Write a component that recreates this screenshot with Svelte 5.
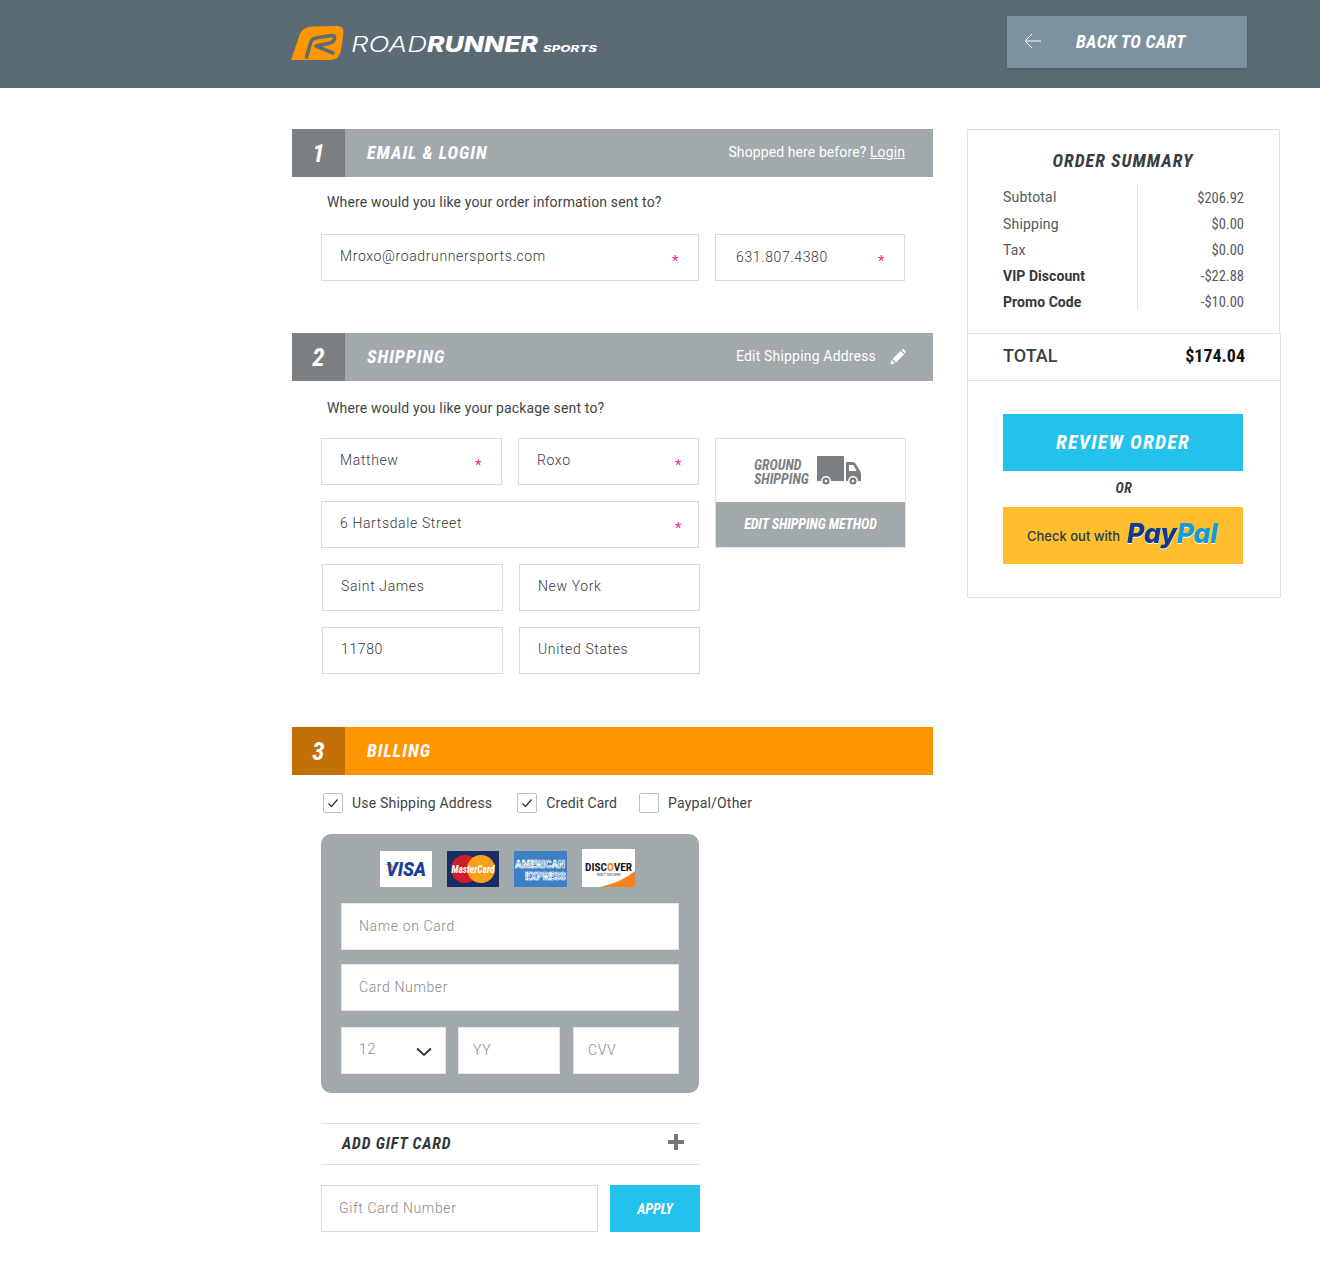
<script>
  const summary = [
    { label: 'Subtotal', value: '$206.92' },
    { label: 'Shipping', value: '$0.00' },
    { label: 'Tax', value: '$0.00' },
    { label: 'VIP Discount', value: '-$22.88', strong: true },
    { label: 'Promo Code', value: '-$10.00', strong: true }
  ];
</script>

<header class="topbar">
  <a class="logo" href="#top" aria-label="Road Runner Sports">
    <svg width="310" height="40" viewBox="0 0 310 40">
      <path d="M1 36 L10 10 Q13 3 22 2.5 L47 2 Q54 2 53.5 9 L51 26 Q49.5 36 40 36 Z" fill="#ff9500" />
      <path d="M16.5 33 L20.5 19 Q22 14 28 13.5 L42 11.5 Q45.5 11.5 44.5 15 Q43.5 18.5 38 19.5 L26 22 L43 29" fill="none" stroke="#5a6b76" stroke-width="3.6" stroke-linejoin="round" stroke-linecap="round" />
      <text class="lg-thin" x="61" y="28" textLength="76" lengthAdjust="spacingAndGlyphs">ROAD</text>
      <text class="lg-bold" x="137" y="28" textLength="111" lengthAdjust="spacingAndGlyphs">RUNNER</text>
      <text class="lg-small" x="253" y="28" textLength="54" lengthAdjust="spacingAndGlyphs">SPORTS</text>
    </svg>
  </a>
  <button class="back" type="button">
    <svg width="18" height="18" viewBox="0 0 18 18" fill="none" stroke="#fff" stroke-width="1">
      <path d="M17 9 H1 M8 2 L1 9 L8 16" />
    </svg>
    <span>BACK TO CART</span>
  </button>
</header>

<main class="page">
  <div class="left">
    <section class="sec one">
      <div class="bar">
        <div class="num">1</div>
        <h2>EMAIL &amp; LOGIN</h2>
        <div class="aside"><span>Shopped here before? <u>Login</u></span></div>
      </div>
      <p class="ask">Where would you like your order information sent to?</p>
      <div class="row email">
        <div class="field grow">Mroxo@roadrunnersports.com<i>*</i></div>
        <div class="field phone">631.807.4380<i>*</i></div>
      </div>
    </section>

    <section class="sec two">
      <div class="bar">
        <div class="num">2</div>
        <h2>SHIPPING</h2>
        <div class="aside">
          <span class="edit">Edit Shipping Address</span>
          <svg class="pencil" width="16" height="16" viewBox="0 0 16 16" fill="#fff">
            <path d="M0.5 15.5 L1.5 11 L5 14.5 Z M2.5 10 L10.5 2 L14 5.5 L6 13.5 Z M11.5 1 L12.5 0.3 Q13 0 13.5 0.3 L15.6 2.4 Q16 3 15.6 3.4 L15 4.5 Z" />
          </svg>
        </div>
      </div>
      <p class="ask">Where would you like your package sent to?</p>
      <div class="ship-grid">
        <div class="ship-fields">
          <div class="row pair">
            <div class="field">Matthew<i>*</i></div>
            <div class="field near">Roxo<i>*</i></div>
          </div>
          <div class="field near">6 Hartsdale Street<i>*</i></div>
        </div>
        <div class="method">
          <div class="method-top">
            <span>GROUND<br />SHIPPING</span>
            <svg width="44" height="30" viewBox="0 0 44 30">
              <path d="M0 0 H27 V25 H0 Z" fill="#7b7f82" />
              <path d="M29 6 H36 Q38 6 39.5 9 L43 15 Q44 16 44 18 V25 H29 Z" fill="#7b7f82" />
              <path d="M32 9 H36.5 L39.5 15 H32 Z" fill="#fff" />
              <circle cx="9" cy="25" r="5" fill="#fff" />
              <circle cx="9" cy="25" r="3.6" fill="#7b7f82" />
              <circle cx="9" cy="25" r="1.3" fill="#fff" />
              <circle cx="36" cy="25" r="5" fill="#fff" />
              <circle cx="36" cy="25" r="3.6" fill="#7b7f82" />
              <circle cx="36" cy="25" r="1.3" fill="#fff" />
            </svg>
          </div>
          <div class="method-btn">EDIT SHIPPING METHOD</div>
        </div>
      </div>
      <div class="row pair shifted">
        <div class="field">Saint James</div>
        <div class="field">New York</div>
      </div>
      <div class="row pair shifted">
        <div class="field">11780</div>
        <div class="field">United States</div>
      </div>
    </section>

    <section class="sec three">
      <div class="bar orange">
        <div class="num">3</div>
        <h2>BILLING</h2>
      </div>
      <div class="checks">
        <label><span class="box on"><svg width="12" height="10" viewBox="0 0 12 10" fill="none" stroke="#333" stroke-width="1.3"><path d="M1.5 5.5 L4.5 8.5 L10.5 1.5" /></svg></span>Use Shipping Address</label>
        <label><span class="box on"><svg width="12" height="10" viewBox="0 0 12 10" fill="none" stroke="#333" stroke-width="1.3"><path d="M1.5 5.5 L4.5 8.5 L10.5 1.5" /></svg></span>Credit Card</label>
        <label><span class="box"></span>Paypal/Other</label>
      </div>

      <div class="card-panel">
        <div class="cards">
          <svg class="card" width="52" height="36" viewBox="0 0 52 36">
            <rect width="52" height="36" fill="#fff" />
            <path d="M4 13 H12 L14 19 Q11 15 4 13 Z" fill="#f7a823" />
            <text class="c-visa" x="6" y="25" textLength="40" lengthAdjust="spacingAndGlyphs">VISA</text>
          </svg>
          <svg class="card" width="52" height="36" viewBox="0 0 52 36">
            <rect width="52" height="36" fill="#172d63" />
            <circle cx="18" cy="18" r="14" fill="#cf1f26" />
            <circle cx="34" cy="18" r="14" fill="#f9a11b" />
            <text class="c-mc" x="4.5" y="21.5" textLength="43" lengthAdjust="spacingAndGlyphs">MasterCard</text>
          </svg>
          <svg class="card" width="53" height="36" viewBox="0 0 53 36">
            <rect width="53" height="36" fill="#3f7fc4" />
            <text class="c-amex" x="1" y="17" textLength="50" lengthAdjust="spacingAndGlyphs">AMERICAN</text>
            <text class="c-amex" x="11" y="29" textLength="41" lengthAdjust="spacingAndGlyphs">EXPRESS</text>
          </svg>
          <svg class="card" width="53" height="38" viewBox="0 0 53 38">
            <rect width="53" height="38" fill="#fff" />
            <path d="M53 38 H18 Q40 33 53 22 Z" fill="#f58220" />
            <text class="c-disc" x="3" y="21.5" textLength="47" lengthAdjust="spacingAndGlyphs">DISC<tspan fill="#f58220">O</tspan>VER</text>
            <text class="c-net" x="15" y="26.5" textLength="24" lengthAdjust="spacingAndGlyphs">NETWORK</text>
          </svg>
        </div>
        <div class="field white ph">Name on Card</div>
        <div class="field white ph">Card Number</div>
        <div class="card-row">
          <div class="field white ph month">12
            <svg width="16" height="10" viewBox="0 0 16 10" fill="none" stroke="#3a3f44" stroke-width="2"><path d="M1 1.5 L8 8 L15 1.5" /></svg>
          </div>
          <div class="field white ph short">YY</div>
          <div class="field white ph short">CVV</div>
        </div>
      </div>

      <div class="gift-head">
        <span>ADD GIFT CARD</span>
        <svg width="16" height="16" viewBox="0 0 16 16" fill="#74787b"><path d="M6 0 H10 V6 H16 V10 H10 V16 H6 V10 H0 V6 H6 Z" /></svg>
      </div>
      <div class="gift-row">
        <div class="field ph">Gift Card Number</div>
        <button type="button" class="apply">APPLY</button>
      </div>
    </section>
  </div>

  <aside class="summary">
    <div class="sum-top">
      <h3>ORDER SUMMARY</h3>
      <div class="lines">
        <div class="labels">
          {#each summary as s}
            <div class:strong={s.strong}>{s.label}</div>
          {/each}
        </div>
        <div class="values">
          {#each summary as s}
            <div>{s.value}</div>
          {/each}
        </div>
      </div>
    </div>
    <div class="total"><span>TOTAL</span><b>$174.04</b></div>
    <div class="actions">
      <button type="button" class="review">REVIEW ORDER</button>
      <div class="or">OR</div>
      <button type="button" class="paypal">
        <span>Check out with</span>
        <svg width="92" height="40" viewBox="0 0 92 40">
          <text class="pp pay" x="0" y="27" textLength="50" lengthAdjust="spacingAndGlyphs">Pay</text>
          <text class="pp pal" x="50" y="27" textLength="41" lengthAdjust="spacingAndGlyphs">Pal</text>
        </svg>
      </button>
    </div>
  </aside>
</main>

<style>
  :global(body) {
    margin: 0;
    background: #fff;
    font-family: Roboto, "Liberation Sans", sans-serif;
    color: #3f4347;
  }

  .topbar {
    height: 88px;
    background: #5a6b76;
    display: flex;
    align-items: center;
    justify-content: space-between;
    padding: 0 73px 0 290px;
    box-sizing: border-box;
  }

  .logo {
    display: block;
    height: 40px;
  }

  .lg-thin,
  .lg-bold,
  .lg-small {
    font-family: Inter, sans-serif;
    font-style: italic;
    fill: #fff;
  }

  .lg-thin { font-size: 21px; font-weight: 300; }
  .lg-bold { font-size: 21px; font-weight: 800; }
  .lg-small { font-size: 9px; font-weight: 800; }

  .back {
    width: 240px;
    height: 52px;
    background: #7d929f;
    border: none;
    box-shadow: 0 1px 3px rgba(0, 0, 0, 0.15);
    display: flex;
    align-items: center;
    padding: 0 0 2px 17px;
    color: #fff;
    margin-bottom: 4px;
  }

  .back span,
  h2,
  h3,
  .gift-head span,
  .review,
  .apply,
  .or,
  .method-top span,
  .method-btn,
  .num,
  .values,
  .total b {
    font-family: "Roboto Condensed", "Liberation Sans Narrow", Roboto, sans-serif;
  }

  .back span {
    margin-left: 34px;
    font-size: 18px;
    font-style: italic;
    font-weight: 700;
    letter-spacing: 0.3px;
  }

  .page {
    display: flex;
    align-items: flex-start;
    padding: 41px 39px 53px 292px;
    gap: 34px;
  }

  .left {
    width: 641px;
    flex: none;
  }

  .sec.two { margin-top: 52px; }
  .sec.three { margin-top: 53px; }

  .bar {
    height: 48px;
    background: #a2a9ad;
    display: flex;
    align-items: center;
    color: #fff;
  }

  .bar.orange { background: #ff9500; }
  .bar.orange .num { background: #c26f05; }

  .num {
    width: 53px;
    height: 100%;
    background: #7b7f82;
    display: flex;
    align-items: center;
    justify-content: center;
    font-size: 25px;
    font-style: italic;
    font-weight: 700;
    flex: none;
  }

  h2 {
    margin: 0 0 0 22px;
    padding-bottom: 2px;
    font-size: 18px;
    font-style: italic;
    font-weight: 700;
    letter-spacing: 1px;
    flex: 1;
  }

  .aside {
    font-size: 14px;
    padding: 0 28px 3px 0;
    display: flex;
    align-items: center;
    letter-spacing: 0.1px;
  }

  .edit { letter-spacing: 0.18px; }

  .pencil {
    margin: 3px -1px 0 14px;
  }

  .ask {
    margin: 0;
    font-size: 14px;
    line-height: 18px;
    padding-left: 35px;
    letter-spacing: 0.16px;
    color: #3f4347;
  }

  .one .ask { margin-top: 16px; }
  .two .ask { margin-top: 18px; }

  .row {
    display: flex;
    gap: 16px;
    margin-left: 29px;
  }

  .email {
    margin-top: 23px;
  }

  .field {
    height: 47px;
    box-sizing: border-box;
    border: 1px solid #d8dadb;
    padding: 0 18px 4px;
    font-size: 14px;
    font-weight: 300;
    letter-spacing: 0.63px;
    color: #35393c;
    display: flex;
    align-items: center;
    position: relative;
    background: #fff;
  }

  .field i {
    position: absolute;
    right: 19px;
    top: 17px;
    font-style: normal;
    font-weight: 400;
    color: #f0288f;
    font-size: 15px;
  }

  .field.near i { right: 16px; }

  .grow { width: 378px; flex: none; }

  .field.phone {
    width: 190px;
    flex: none;
    padding: 0 20px 2px;
  }

  .ship-grid {
    display: grid;
    grid-template-columns: 378px 191px;
    gap: 16px;
    margin: 21px 0 16px 29px;
  }

  .ship-fields {
    display: flex;
    flex-direction: column;
    gap: 16px;
  }

  .pair {
    margin-left: 0;
  }

  .pair .field {
    width: 181px;
    flex: none;
  }

  .shifted {
    margin-left: 30px;
    margin-bottom: 16px;
  }

  .shifted:last-child { margin-bottom: 0; }

  .method {
    border: 1px solid #dfe1e2;
    display: flex;
    flex-direction: column;
    height: 110px;
    box-sizing: border-box;
  }

  .method-top {
    flex: 1;
    display: flex;
    align-items: center;
    padding-left: 38px;
    gap: 8px;
  }

  .method-top span {
    font-size: 14px;
    line-height: 14px;
    font-weight: 700;
    font-style: italic;
    color: #7b7f82;
    margin-top: 2px;
  }

  .method-btn {
    height: 45px;
    padding-bottom: 1px;
    box-sizing: border-box;
    background: #a2a9ad;
    color: #fff;
    font-size: 14px;
    font-style: italic;
    font-weight: 700;
    letter-spacing: -0.1px;
    display: flex;
    align-items: center;
    justify-content: center;
  }

  .checks {
    display: flex;
    margin: 17px 0 21px 31px;
    height: 21px;
  }

  .checks label {
    display: flex;
    align-items: center;
    font-size: 14px;
    letter-spacing: 0.2px;
    color: #3f4347;
    margin-right: 25px;
  }

  .checks label:nth-child(2) {
    margin-right: 22px;
    letter-spacing: 0.1px;
  }

  .box {
    width: 20px;
    height: 20px;
    box-sizing: border-box;
    border: 1px solid #bfc2c4;
    border-radius: 2px;
    margin: 1px 9px 0 0;
    display: flex;
    align-items: center;
    justify-content: center;
  }

  .card-panel {
    width: 378px;
    height: 259px;
    margin-left: 29px;
    box-sizing: border-box;
    background: #a2a9ad;
    border-radius: 10px;
    padding: 15px 20px 0;
    display: flex;
    flex-direction: column;
  }

  .cards {
    display: flex;
    justify-content: center;
    align-items: flex-end;
    gap: 15px;
    height: 38px;
    margin-bottom: 16px;
    padding-right: 6px;
  }

  .card { flex: none; }
  .c-visa { font: italic 900 20px Roboto, sans-serif; fill: #1d3e99; }
  .c-mc { font: italic 700 10.5px "Roboto Condensed", Roboto, sans-serif; fill: #fff; }
  .c-amex { font: 700 11px "Roboto Condensed", Roboto, sans-serif; fill: #3f7fc4; stroke: #fff; stroke-width: 0.7px; }
  .c-disc { font: 700 10px "Roboto Condensed", Roboto, sans-serif; fill: #1a1a1a; }
  .c-net { font: 400 3.5px Roboto, sans-serif; fill: #555; }

  .card-panel .field { border-color: #e3e5e6; }

  .card-panel > .field {
    margin-bottom: 14px;
    padding-left: 17px;
  }

  .field.ph {
    color: #85898c;
    padding-bottom: 2px;
  }

  .card-row {
    display: flex;
    gap: 12px;
    margin-top: 2px;
  }

  .field.month {
    width: 105px;
    justify-content: space-between;
    padding: 0 18px 4px 17px;
  }

  .month svg { margin: 7px -5px 0 0; }

  .field.short {
    width: 102px;
    padding-left: 14px;
  }

  .field.short:last-child {
    width: 106px;
    margin-left: 1px;
  }

  .gift-head {
    width: 378px;
    height: 42px;
    box-sizing: border-box;
    margin: 30px 0 20px 29px;
    border-top: 1px solid #dcdedf;
    border-bottom: 1px solid #dcdedf;
    display: flex;
    align-items: center;
    justify-content: space-between;
    padding: 0 15px 4px 21px;
  }

  .gift-head span {
    font-size: 16px;
    font-style: italic;
    font-weight: 700;
    letter-spacing: 0.85px;
    color: #33373a;
    padding-top: 3px;
  }

  .gift-row {
    display: grid;
    grid-template-columns: 277px 90px;
    gap: 12px;
    margin-left: 29px;
  }

  .gift-row .field { padding-left: 17px; }

  .apply {
    height: 47px;
    border: none;
    background: #24c1ec;
    color: #fff;
    font-size: 14px;
    font-style: italic;
    font-weight: 700;
  }

  .summary {
    width: 314px;
    box-sizing: border-box;
    flex: none;
    height: 469px;
    display: flex;
    flex-direction: column;
  }

  .sum-top {
    width: 313px;
    height: 204px;
    box-sizing: border-box;
    border: 1px solid #dfe1e2;
    border-bottom: none;
  }

  h3 {
    margin: 20px 0 0;
    text-align: center;
    font-size: 18px;
    font-style: italic;
    font-weight: 700;
    letter-spacing: 1.05px;
    color: #3a3d40;
    line-height: 22px;
    padding-right: 1px;
  }

  .lines {
    display: grid;
    grid-template-columns: 135px 1fr;
    margin: 13px 35px 0 35px;
    height: 125px;
    font-size: 14px;
  }

  .labels,
  .values {
    display: flex;
    flex-direction: column;
    height: 125px;
  }

  .labels div,
  .values div {
    flex: 0 0 26px;
    display: flex;
    align-items: center;
  }

  .labels {
    border-right: 1px solid #e2e4e5;
    color: #54585b;
    letter-spacing: 0.2px;
  }

  .labels div:first-child { padding-bottom: 2px; box-sizing: border-box; }

  .labels .strong {
    color: #33373a;
    font-weight: 700;
    letter-spacing: 0.05px;
  }

  .values {
    align-items: flex-end;
    color: #54585b;
    font-size: 14.5px;
  }

  .total {
    height: 48px;
    box-sizing: border-box;
    border: 1px solid #dfe1e2;
    display: flex;
    align-items: center;
    justify-content: space-between;
    padding: 0 35px 4px;
    font-size: 18px;
    font-weight: 500;
    color: #3a3d40;
  }

  .total b {
    color: #111;
    font-size: 18px;
  }

  .actions {
    flex: 1;
    box-sizing: border-box;
    border: 1px solid #dfe1e2;
    border-top: none;
    padding: 33px 36px 0 35px;
  }

  .review {
    width: 240px;
    height: 57px;
    display: block;
    border: none;
    background: #24c1ec;
    color: #fff;
    font-size: 20px;
    font-style: italic;
    font-weight: 700;
    letter-spacing: 1.25px;
    padding: 0 0 1px;
  }

  .or {
    text-align: center;
    font-size: 14px;
    font-style: italic;
    font-weight: 700;
    line-height: 35px;
    height: 36px;
    color: #3a3d40;
    letter-spacing: 0.6px;
    width: 242px;
  }

  .paypal {
    width: 240px;
    height: 57px;
    border: none;
    background: #ffbe2e;
    display: flex;
    align-items: center;
    padding: 0 0 0 24px;
    gap: 7px;
    font-family: Inter, Roboto, sans-serif;
    font-size: 13px;
    font-weight: 500;
    color: #2c3a55;
  }

  .pp {
    font: italic 800 27px Inter, Roboto, sans-serif;
    filter: drop-shadow(0 1px 0 #fff);
  }

  .pay { fill: #0f3a8e; }
  .pal { fill: #0f9bdc; }
</style>
